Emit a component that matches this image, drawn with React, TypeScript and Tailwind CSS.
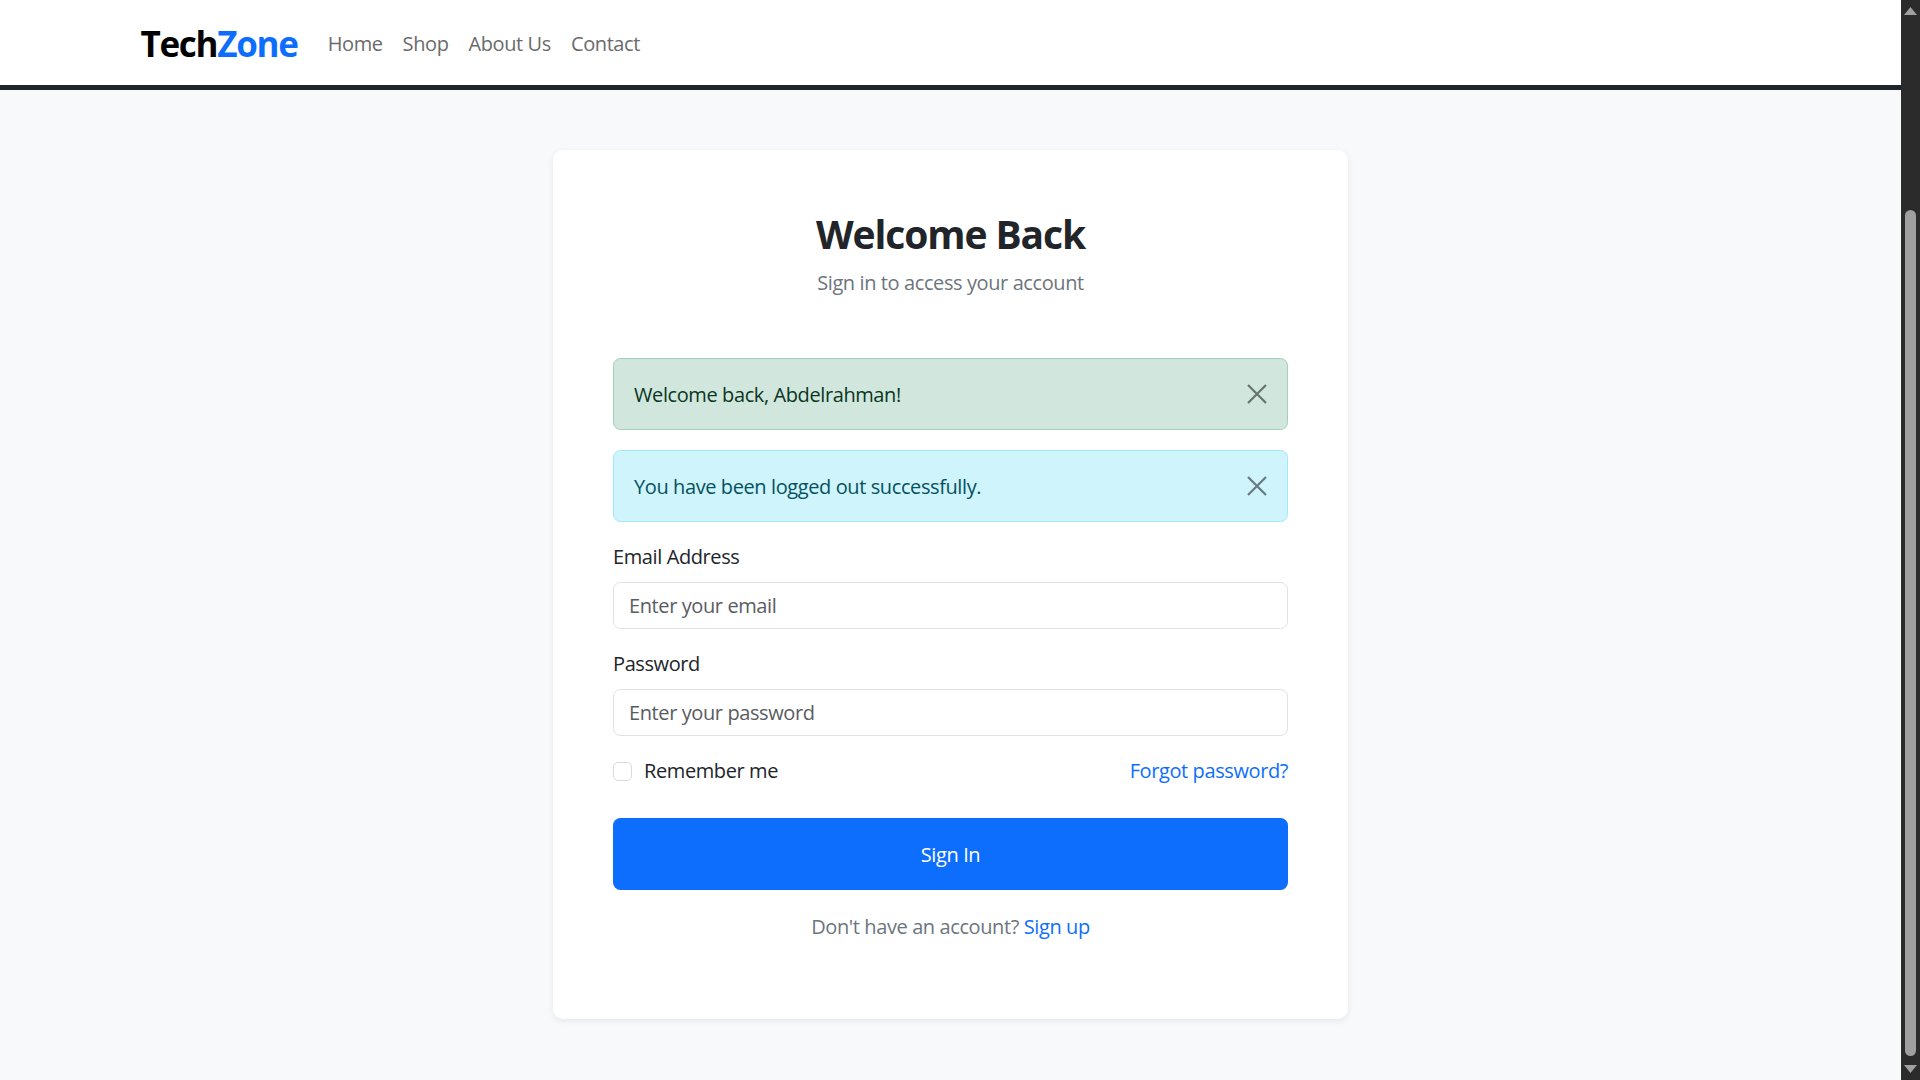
import { useState } from 'react'

function CloseIcon() {
  return (
    <svg width="20" height="20" viewBox="0 0 20 20" className="text-black/50">
      <path d="M1 1 L19 19 M19 1 L1 19" stroke="currentColor" strokeWidth="2.2" strokeLinecap="butt" />
    </svg>
  )
}

function Alert({ tone, text }: { tone: 'success' | 'info'; text: string }) {
  const [open, setOpen] = useState(true)
  if (!open) return null
  const cls =
    tone === 'success'
      ? 'bg-[#d1e7dd] border-[#a3cfbb] text-[#0a3622]'
      : 'bg-[#cff4fc] border-[#9eeaf9] text-[#055160]'
  return (
    <div className={`flex items-center justify-between border rounded-[7.5px] px-5 h-[72px] mb-5 ${cls}`}>
      <span className="leading-[30px] pt-[2px]">{text}</span>
      <button type="button" onClick={() => setOpen(false)} className="flex items-center">
        <CloseIcon />
      </button>
    </div>
  )
}

function Scrollbar() {
  return (
    <div className="w-[19px] shrink-0 bg-[#2b2b2b] flex flex-col items-center pt-[7px]">
      <svg width="13" height="8" viewBox="0 0 13 8">
        <path d="M6.5 0 L13 8 L0 8 Z" fill="#9f9f9f" />
      </svg>
      <div className="mt-[195px] w-[11px] h-[846px] rounded-full bg-[#9f9f9f]" />
      <svg width="13" height="8" viewBox="0 0 13 8" className="mt-[9px]">
        <path d="M0 0 L13 0 L6.5 8 Z" fill="#9f9f9f" />
      </svg>
    </div>
  )
}

export default function App() {
  const links = ['Home', 'Shop', 'About Us', 'Contact']

  return (
    <div className="flex min-h-screen font-['Open_Sans','Noto_Sans',sans-serif] text-[20px] tracking-[-0.4px] text-[#212529]">
      <div className="flex-1 bg-[#f8f9fa]">
        {/* Navbar */}
        <nav className="bg-white border-b-[5px] border-[#212529]">
          <div className="max-w-[1650px] mx-auto px-[15px] h-[85px] flex items-center pt-[2px]">
            <a href="#" className="text-[35px] font-bold leading-none mr-5 tracking-[-1.3px]">
              <span className="text-black">Tech</span>
              <span className="text-[#0d6efd]">Zone</span>
            </a>
            <ul className="flex">
              {links.map((link) => (
                <li key={link}>
                  <a href="#" className="px-[10px] text-[#6b6b6b] leading-[30px]">
                    {link}
                  </a>
                </li>
              ))}
            </ul>
          </div>
        </nav>

        {/* Login card */}
        <main className="max-w-[1650px] mx-auto px-[15px] py-[60px]">
          <div className="w-[795px] mx-auto bg-white rounded-[10px] shadow-[0_2px_6px_rgba(0,0,0,0.08)] p-[60px]">
            <div className="text-center mb-[60px]">
              <h2 className="text-[39px] leading-[48px] font-bold mb-[10px] tracking-[-1.1px]">Welcome Back</h2>
              <p className="leading-[30px] text-[#6c757d]">Sign in to access your account</p>
            </div>

            <Alert tone="success" text="Welcome back, Abdelrahman!" />
            <Alert tone="info" text="You have been logged out successfully." />

            <form onSubmit={(e) => e.preventDefault()}>
              <div className="mb-5">
                <label className="block leading-[30px] mb-[10px]">Email Address</label>
                <input
                  type="email"
                  placeholder="Enter your email"
                  className="w-full h-[47px] border border-[#dee2e6] rounded-[7.5px] px-[15px] outline-none placeholder:text-[#595c5f]"
                />
              </div>
              <div className="mb-5">
                <label className="block leading-[30px] mb-[10px]">Password</label>
                <input
                  type="password"
                  placeholder="Enter your password"
                  className="w-full h-[47px] border border-[#dee2e6] rounded-[7.5px] px-[15px] outline-none placeholder:text-[#595c5f]"
                />
              </div>

              <div className="flex items-center justify-between h-[30px] mt-[2px] mb-[32px]">
                <label className="flex items-center gap-[12px]">
                  <span className="w-[19px] h-[19px] border border-[#d6dadf] rounded-[5px] bg-white" />
                  <span className="leading-[30px]">Remember me</span>
                </label>
                <a href="#" className="text-[#0d6efd] leading-[30px]">
                  Forgot password?
                </a>
              </div>

              <button type="submit" className="w-full h-[72px] bg-[#0d6efd] text-white rounded-[7.5px] pt-[2px]">
                Sign In
              </button>
            </form>

            <p className="mt-[22px] mb-[17px] text-center leading-[30px] text-[#6c757d]">
              Don't have an account?{' '}
              <a href="#" className="text-[#0d6efd]">
                Sign up
              </a>
            </p>
          </div>
        </main>
      </div>
      <Scrollbar />
    </div>
  )
}
